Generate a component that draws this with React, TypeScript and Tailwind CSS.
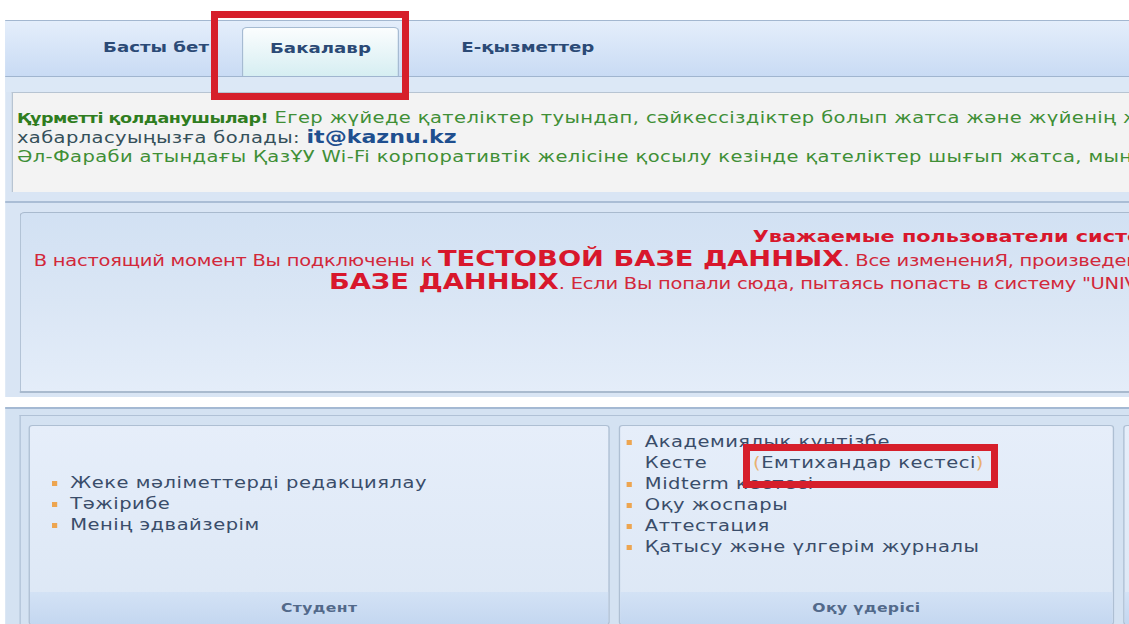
import React from "react";

const font = "font-['DejaVu_Sans',sans-serif]";

function Bullet() {
  return <span className="mt-[8px] h-[5px] w-[4px] shrink-0 bg-[#eda550]" />;
}

function Item({ children, bullet = true }: { children: React.ReactNode; bullet?: boolean }) {
  return (
    <li className="flex h-[21px] items-start gap-[10px] whitespace-nowrap">
      {bullet ? <Bullet /> : <span className="w-[4px] shrink-0" />}
      <span>{children}</span>
    </li>
  );
}

function Card({
  width,
  title,
  children,
  bodyClass,
}: {
  width: string;
  title: string;
  children?: React.ReactNode;
  bodyClass: string;
}) {
  return (
    <div className={`${width} flex h-[200px] shrink-0 flex-col overflow-hidden rounded-[3px] border border-[#aebfd3] bg-gradient-to-b from-[#e6eefa] to-[#dce7f5]`}>
      <div className={`flex-1 ${bodyClass}`}>{children}</div>
      <div className="flex h-[32px] items-center justify-center bg-gradient-to-b from-[#d3e2f5] to-[#c4d7f0] text-[12px] font-bold tracking-[0.3px] text-[#52698a]">
        {title}
      </div>
    </div>
  );
}

export default function App() {
  return (
    <div className={`relative h-[624px] w-[1129px] overflow-hidden bg-white ${font}`}>
      {/* the portal page is laid out at 869px and widened to the window */}
      <div className="w-[869px] origin-top-left scale-x-[1.3] pl-[4px] pt-[20px]">
        {/* upper frame: tabs, notice and test-database banner */}
        <div className="bg-[#d9e5f4] pb-[4px]">
          <div className="flex h-[56px] items-start gap-[8px] border-t border-[#a3b7d0] bg-gradient-to-b from-[#e4eefb] to-[#c9dbf4] pl-[58px] pt-[6px] text-[14px] font-bold text-[#2b4a76]">
            <div className="flex h-[49px] w-[116px] items-center justify-center pb-[8px]">Басты бет</div>
            <div className="flex h-[49px] w-[121px] items-center justify-center rounded-t-[4px] border border-b-0 border-[#a6bbd2] bg-gradient-to-b from-[#fbfdfe] to-[#d6eef2] pb-[8px]">
              Бакалавр
            </div>
            <div className="flex h-[49px] w-[182px] items-center justify-center pb-[8px]">Е-қызметтер</div>
          </div>
          <div className="h-[16px] border-t border-[#a0b5cf] bg-[#dce8f6]" />

          {/* notice */}
          <div className="ml-[5px] h-[100px] border-l border-t border-[#b7c4d2] bg-[#f3f3f3] pl-[3px] pt-[16px] text-[15px] leading-[19px] tracking-[0.3px] whitespace-nowrap">
            <div className="text-[#3f8f36]">
              <span className="text-[13.5px] font-bold tracking-[-0.4px] text-[#2f7d20]">Құрметті қолданушылар!</span> Егер жүйеде қателіктер туындап, сәйкессіздіктер болып жатса және жүйенің жұмысы туралы сұрақтарыңыз болса,
            </div>
            <div className="text-[#35505a]">
              хабарласуыңызға болады: <span className="text-[17px] font-bold tracking-[0px] text-[#1f4f8f]">it@kaznu.kz</span>
            </div>
            <div className="text-[#3f8f36]">
              Әл-Фараби атындағы ҚазҰУ Wi-Fi корпоративтік желісіне қосылу кезінде қателіктер шығып жатса, мынаған жазыңыз
            </div>
          </div>

          <div className="h-[9px]" />
          <div className="h-[2px] bg-[#aabdd5]" />
          <div className="h-[9px]" />

          {/* test database banner */}
          <div className="ml-[11px] h-[181px] rounded-tl-[4px] border-b-2 border-l border-t border-[#a9bace] bg-gradient-to-b from-[#d2e1f3] via-[#dae6f5] to-[#e4edf9] pt-[12px] whitespace-nowrap text-[#d2283a]">
            <div className="h-[23px] pl-[563px] text-[16px] font-bold leading-[23px] text-[#d8172c]">
              Уважаемые пользователи системы UNIVER!
            </div>
            <div className="h-[23px] pl-[10px] text-[15px] leading-[23px] tracking-[-0.2px]">
              В настоящий момент Вы подключены к{" "}
              <span className="text-[21px] font-bold tracking-[0px] text-[#d8172c]">ТЕСТОВОЙ БАЗЕ ДАННЫХ</span>. Все изменениЯ, произведенные в
            </div>
            <div className="h-[23px] pl-[237px] text-[15px] leading-[23px] tracking-[-0.2px]">
              <span className="text-[21px] font-bold tracking-[0px] text-[#d8172c]">БАЗЕ ДАННЫХ</span>. Если Вы попали сюда, пытаясь попасть в систему "UNIVER", перейдите
            </div>
          </div>
        </div>

        <div className="h-[10px] bg-white" />

        {/* lower frame: menu cards */}
        <div className="h-[220px] border-t-2 border-[#a4b9d3] bg-[#d4e2f2] pl-[11px] pt-[6px]">
          <div className="h-full border-l border-t border-[#b0c1d6] pl-[6px] pt-[9px]">
            <div className="flex gap-[7px] text-[15px] leading-[21px] tracking-[0.4px] text-[#3a4d6a]">
              <Card width="w-[447px]" title="Студент" bodyClass="pl-[17px] pt-[47px]">
                <ul>
                  <Item>Жеке мәліметтерді редакциялау</Item>
                  <Item>Тәжірибе</Item>
                  <Item>Менің эдвайзерім</Item>
                </ul>
              </Card>
              <Card width="w-[381px]" title="Оқу үдерісі" bodyClass="pl-[5px] pt-[6px]">
                <ul>
                  <Item>Академиялық күнтізбе</Item>
                  <Item bullet={false}>
                    Кесте <span className="ml-[30px] text-[#e9b16f]">(</span>Емтихандар кестесі<span className="text-[#e9b16f]">)</span>
                  </Item>
                  <Item>Midterm кестесі</Item>
                  <Item>Оқу жоспары</Item>
                  <Item>Аттестация</Item>
                  <Item>Қатысу және үлгерім журналы</Item>
                </ul>
              </Card>
              <Card width="w-[231px]" title="" bodyClass="" />
            </div>
          </div>
        </div>
      </div>

      {/* red highlight frames */}
      <div className="absolute left-[211px] top-[11px] h-[89px] w-[198px] border-[7px] border-[#d61f2b]" />
      <div className="absolute left-[743px] top-[444px] h-[44px] w-[255px] border-[7px] border-[#d61f2b]" />
    </div>
  );
}
